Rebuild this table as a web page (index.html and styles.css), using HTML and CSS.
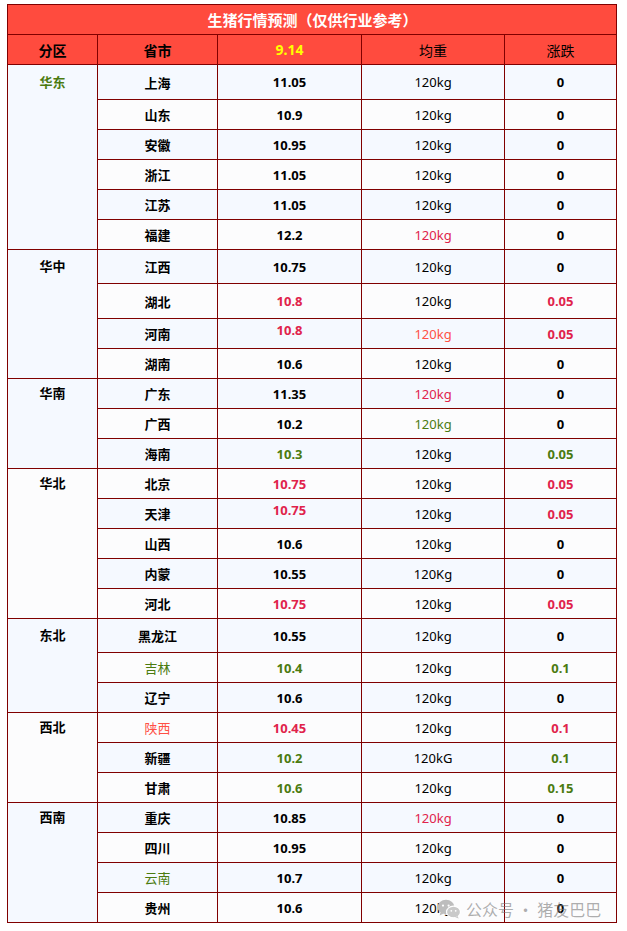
FILE: index.html
```html
<!DOCTYPE html>
<html lang="zh-CN">
<head>
<meta charset="utf-8">
<title>生猪行情预测</title>
<link rel="stylesheet" href="styles.css">
</head>
<body>
<div class="page">
  <div class="sheet">
    <div class="title">生猪行情预测（仅供行业参考）</div>
    <div class="hd b">分区</div>
    <div class="hd b">省市</div>
    <div class="hd b date">9.14</div>
    <div class="hd">均重</div>
    <div class="hd">涨跌</div>

    <div class="region blue span6 green"><span class="t34">华东</span></div>
    <div class="c blue b">上海</div><div class="c blue b">11.05</div><div class="c blue">120kg</div><div class="c blue b">0</div>
    <div class="c white b">山东</div><div class="c white b">10.9</div><div class="c white">120kg</div><div class="c white b">0</div>
    <div class="c blue b">安徽</div><div class="c blue b">10.95</div><div class="c blue">120kg</div><div class="c blue b">0</div>
    <div class="c white b">浙江</div><div class="c white b">11.05</div><div class="c white">120kg</div><div class="c white b">0</div>
    <div class="c blue b">江苏</div><div class="c blue b">11.05</div><div class="c blue">120kg</div><div class="c blue b">0</div>
    <div class="c white b">福建</div><div class="c white b">12.2</div><div class="c white red">120kg</div><div class="c white b">0</div>

    <div class="region blue span4"><span class="t33">华中</span></div>
    <div class="c blue b">江西</div><div class="c blue b">10.75</div><div class="c blue">120kg</div><div class="c blue b">0</div>
    <div class="c white b">湖北</div><div class="c white b red">10.8</div><div class="c white">120kg</div><div class="c white b red">0.05</div>
    <div class="c blue b">河南</div><div class="c blue b red up">10.8</div><div class="c blue coral">120kg</div><div class="c blue b red">0.05</div>
    <div class="c white b">湖南</div><div class="c white b">10.6</div><div class="c white">120kg</div><div class="c white b">0</div>

    <div class="region blue span3"><span class="t29">华南</span></div>
    <div class="c blue b">广东</div><div class="c blue b">11.35</div><div class="c blue red">120kg</div><div class="c blue b">0</div>
    <div class="c white b">广西</div><div class="c white b">10.2</div><div class="c white green">120kg</div><div class="c white b">0</div>
    <div class="c blue b">海南</div><div class="c blue b green">10.3</div><div class="c blue">120kg</div><div class="c blue b green">0.05</div>

    <div class="region white span5"><span class="t29">华北</span></div>
    <div class="c white b">北京</div><div class="c white b red">10.75</div><div class="c white">120kg</div><div class="c white b red">0.05</div>
    <div class="c blue b">天津</div><div class="c blue b red up">10.75</div><div class="c blue">120kg</div><div class="c blue b red">0.05</div>
    <div class="c white b">山西</div><div class="c white b">10.6</div><div class="c white">120kg</div><div class="c white b">0</div>
    <div class="c blue b">内蒙</div><div class="c blue b">10.55</div><div class="c blue">120Kg</div><div class="c blue b">0</div>
    <div class="c white b">河北</div><div class="c white b red">10.75</div><div class="c white">120kg</div><div class="c white b red">0.05</div>

    <div class="region blue span3"><span class="t33">东北</span></div>
    <div class="c blue b">黑龙江</div><div class="c blue b">10.55</div><div class="c blue">120kg</div><div class="c blue b">0</div>
    <div class="c white green">吉林</div><div class="c white b green">10.4</div><div class="c white">120kg</div><div class="c white b green">0.1</div>
    <div class="c blue b">辽宁</div><div class="c blue b">10.6</div><div class="c blue">120kg</div><div class="c blue b">0</div>

    <div class="region white span3"><span class="t29">西北</span></div>
    <div class="c white coral">陕西</div><div class="c white b red">10.45</div><div class="c white">120kg</div><div class="c white b red">0.1</div>
    <div class="c blue b">新疆</div><div class="c blue b green">10.2</div><div class="c blue">120kG</div><div class="c blue b green">0.1</div>
    <div class="c white b">甘肃</div><div class="c white b green">10.6</div><div class="c white">120kg</div><div class="c white b green">0.15</div>

    <div class="region blue span4"><span class="t29">西南</span></div>
    <div class="c blue b">重庆</div><div class="c blue b">10.85</div><div class="c blue red">120kg</div><div class="c blue b">0</div>
    <div class="c white b">四川</div><div class="c white b">10.95</div><div class="c white">120kg</div><div class="c white b">0</div>
    <div class="c blue green">云南</div><div class="c blue b">10.7</div><div class="c blue">120kg</div><div class="c blue b">0</div>
    <div class="c white b">贵州</div><div class="c white b">10.6</div><div class="c white">120kg</div><div class="c white b">0</div>

    <div class="watermark">
      <svg class="wx" width="24" height="20" viewBox="0 0 24 20" aria-hidden="true">
        <ellipse cx="9" cy="8" rx="8.5" ry="7.2" fill="#bdbdbd"/>
        <path d="M3.5 13.2 L2.6 16.6 L6.6 14.4 Z" fill="#bdbdbd"/>
        <circle cx="6" cy="6.6" r="1.1" fill="#fff"/>
        <circle cx="11.6" cy="6.6" r="1.1" fill="#fff"/>
        <ellipse cx="16.5" cy="13" rx="7" ry="5.8" fill="#c9c9c9" stroke="#fff" stroke-width="1.2"/>
        <path d="M20.6 17 L21.6 19.6 L18.2 18.2 Z" fill="#c9c9c9"/>
        <circle cx="14.3" cy="11.8" r="0.9" fill="#fff"/>
        <circle cx="18.7" cy="11.8" r="0.9" fill="#fff"/>
      </svg>
      <span>公众号 · 猪友巴巴</span>
    </div>
  </div>
</div>
</body>
</html>
```

FILE: styles.css
```css
html, body {
  margin: 0;
  padding: 0;
  background: #ffffff;
}

.page {
  padding: 4px 0 0 7px;
}

.sheet {
  position: relative;
  display: grid;
  width: 610px;
  box-sizing: border-box;
  grid-template-columns: 89px 119px 143px 142px 111px;
  grid-template-rows:
    29px 29px
    34px 29px 29px 29px 29px 29px
    33px 34px 29px 29px
    29px 29px 29px
    29px 29px 29px 29px 29px
    33px 29px 29px
    29px 29px 29px
    29px 29px 29px 29px;
  gap: 1px;
  padding: 1px;
  background: #800000;
  font-family: "Noto Sans", "Noto Sans CJK SC", sans-serif;
  font-size: 13px;
  color: #000;
}

.title {
  grid-column: 1 / -1;
  background: #ff4b3e;
  color: #fff;
  font-weight: 700;
  font-size: 15px;
  display: flex;
  align-items: center;
  justify-content: center;
  padding-left: 1px;
}

.hd {
  background: #ff4b3e;
  display: flex;
  align-items: center;
  justify-content: center;
  font-size: 14px;
  color: #000;
}

.hd.date {
  color: #ffff00;
}

.c {
  display: flex;
  align-items: center;
  justify-content: center;
}

.region {
  display: flex;
  justify-content: center;
  align-items: flex-start;
}

.region span {
  display: block;
  font-weight: 700;
}

.t29 { line-height: 29px; }
.t33 { line-height: 33px; }
.t34 { line-height: 34px; }

.span3 { grid-row: span 3; }
.span4 { grid-row: span 4; }
.span5 { grid-row: span 5; }
.span6 { grid-row: span 6; }

.blue { background: #f5f9ff; }
.white { background: #fcfcfd; }

.b { font-weight: 700; }

.green { color: #4b7b10; }
.red { color: #e0234b; }
.coral { color: #ff5045; }

.up { padding-bottom: 7px; }

.watermark {
  position: absolute;
  left: 430px;
  top: 893px;
  display: flex;
  align-items: center;
  gap: 5px;
  font-size: 16px;
  color: rgba(120, 120, 120, 0.6);
  font-family: "Noto Sans CJK SC", sans-serif;
  pointer-events: none;
}

.wx {
  display: block;
}
```
